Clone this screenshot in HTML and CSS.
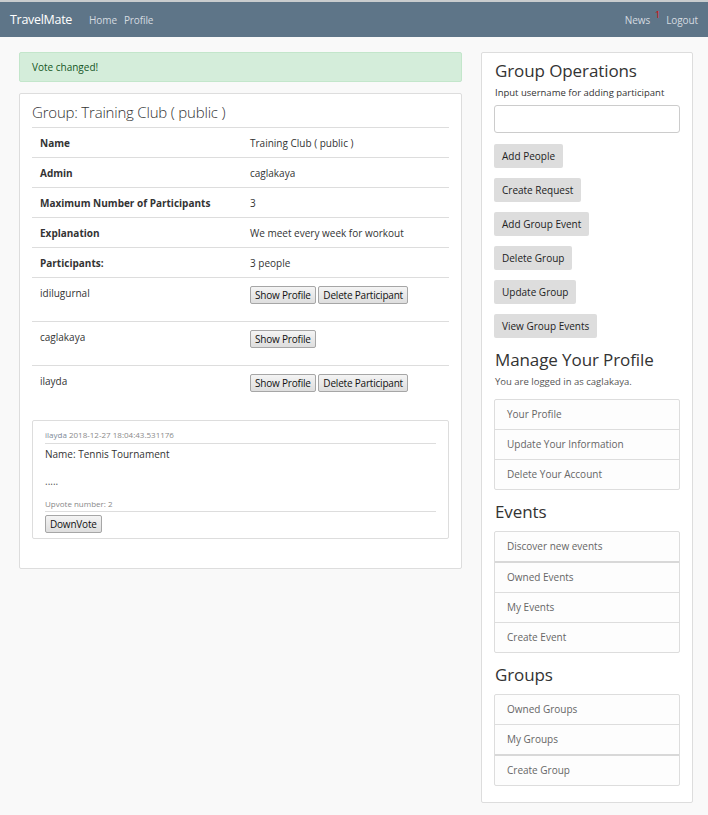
FILE: index.html
```html
<!DOCTYPE html>
<html>
<head>
<meta charset="utf-8">
<title>TravelMate</title>
<link rel="stylesheet" href="styles.css">
</head>
<body>
<nav class="navbar">
  <div class="nav-left">
    <span class="brand">TravelMate</span>
    <a class="nav-link">Home</a>
    <a class="nav-link">Profile</a>
  </div>
  <div class="nav-right">
    <a class="nav-link">News</a><sup class="badge">1</sup>
    <a class="nav-link">Logout</a>
  </div>
</nav>
<div class="page">
  <main class="main-col">
    <div class="alert">Vote changed!</div>
    <section class="card">
      <h3 class="card-title">Group: Training Club ( public )</h3>
      <table class="info">
        <tr><th>Name</th><td>Training Club ( public )</td></tr>
        <tr><th>Admin</th><td>caglakaya</td></tr>
        <tr><th>Maximum Number of Participants</th><td>3</td></tr>
        <tr><th>Explanation</th><td>We meet every week for workout</td></tr>
        <tr><th>Participants:</th><td>3 people</td></tr>
        <tr class="prow"><td>idilugurnal</td><td><button class="btn">Show Profile</button> <button class="btn">Delete Participant</button></td></tr>
        <tr class="prow"><td>caglakaya</td><td><button class="btn">Show Profile</button></td></tr>
        <tr class="prow"><td>ilayda</td><td><button class="btn">Show Profile</button> <button class="btn">Delete Participant</button></td></tr>
      </table>
      <div class="post">
        <div class="post-meta"><span class="post-user">ilayda</span> 2018-12-27 18:04:43.531176</div>
        <div class="post-name">Name: Tennis Tournament</div>
        <div class="post-dots">.....</div>
        <div class="post-votes">Upvote number: 2</div>
        <button class="btn btn-vote">DownVote</button>
      </div>
    </section>
  </main>
  <aside class="side">
    <h2 class="side-h first">Group Operations</h2>
    <label class="side-label">Input username for adding participant</label>
    <input class="side-input" type="text">
    <div class="ops">
      <button class="op">Add People</button>
      <button class="op">Create Request</button>
      <button class="op">Add Group Event</button>
      <button class="op">Delete Group</button>
      <button class="op">Update Group</button>
      <button class="op">View Group Events</button>
    </div>
    <h2 class="side-h">Manage Your Profile</h2>
    <p class="side-text">You are logged in as caglakaya.</p>
    <ul class="list">
      <li>Your Profile</li>
      <li>Update Your Information</li>
      <li>Delete Your Account</li>
    </ul>
    <h2 class="side-h lh">Events</h2>
    <ul class="list">
      <li>Discover new events</li>
      <li class="sep">Owned Events</li>
      <li>My Events</li>
      <li>Create Event</li>
    </ul>
    <h2 class="side-h lh">Groups</h2>
    <ul class="list">
      <li>Owned Groups</li>
      <li>My Groups</li>
      <li class="sep">Create Group</li>
    </ul>
  </aside>
</div>
</body>
</html>
```
FILE: styles.css
```css
* { box-sizing: border-box; }
html, body { margin: 0; padding: 0; }
body {
  background: #f9f9f9;
  font-family: "Open Sans", "Noto Sans", "Liberation Sans", sans-serif;
  color: #333;
  font-size: 10px;
  width: 708px;
}
.navbar {
  height: 37px;
  border-top: 2px solid #c9ccce;
  background: #5e7588;
  display: flex;
  justify-content: space-between;
  align-items: center;
  padding: 0 10px 0 10px;
}
.nav-left, .nav-right { display: flex; align-items: center; }
.brand { color: #fff; font-size: 12.5px; margin-right: 17px; letter-spacing: -0.3px; }
.nav-link { color: #d5dbe0; font-size: 10px; margin-right: 7px; letter-spacing: -0.1px; }
.nav-right .nav-link { margin-right: 0; }
.badge { color: #e00000; font-size: 9px; margin: 0 6px 0 5px; position: relative; top: -5px; }
.page {
  display: flex;
  gap: 19px;
  padding: 15px 15px 10px 19px;
  align-items: flex-start;
}
.main-col { width: 443px; }
.alert {
  background: #d4edda;
  border: 1px solid #c3e6cb;
  color: #155724;
  border-radius: 2px;
  height: 30px;
  padding: 0 12px;
  display: flex;
  align-items: center;
  font-size: 10px;
  margin-bottom: 11px;
}
.card {
  background: #fff;
  border: 1px solid #ddd;
  border-radius: 2px;
  padding: 6px 12px 29px 12px;
}
.card-title {
  font-size: 15px;
  font-weight: 300;
  margin: 0;
  height: 27px;
  line-height: 24px;
  color: #333;
  letter-spacing: -0.2px;
}
.info { width: 100%; border-collapse: collapse; }
.info th, .info td {
  border-top: 1px solid #ddd;
  height: 30px;
  padding: 0 8px;
  text-align: left;
  font-size: 10px;
  vertical-align: middle;
}
.info th { width: 210px; font-weight: 700; color: #333; }
.info td { color: #333; }
.info tr.prow td {
  height: 44px;
  vertical-align: top;
  padding-top: 8px;
}
.btn {
  font-family: inherit;
  font-size: 10px;
  letter-spacing: -0.2px;
  color: #111;
  background: linear-gradient(#f4f4f4, #dedede);
  border: 1px solid #a6a6a6;
  border-radius: 2px;
  padding: 1px 4px;
  height: 18px;
  line-height: 14px;
  margin: 0;
}
.post {
  margin-top: 10px;
  border: 1px solid #ddd;
  border-radius: 2px;
  padding: 8px 12px 5px 12px;
}
.post-meta {
  font-size: 8px;
  color: #8a8a8a;
  padding-bottom: 3px;
  border-bottom: 1px solid #ddd;
}
.post-user { color: #7d8a98; }
.post-name { font-size: 10px; color: #333; margin-top: 3px; line-height: 15px; }
.post-dots { font-size: 10px; color: #555; margin-top: 12px; line-height: 14px; }
.post-votes {
  font-size: 8px; color: #888;
  margin-top: 10px;
  padding-bottom: 2px;
  border-bottom: 1px solid #ddd;
}
.btn-vote { margin-top: 3px; font-size: 10px; padding: 1px 4px; }
.side {
  width: 212px;
  background: #fff;
  border: 1px solid #ddd;
  border-radius: 2px;
  padding: 6px 13px 16px 13px;
}
.side-h {
  font-size: 17px;
  font-weight: 500;
  margin: 10px 0 3px 0;
  line-height: 24px;
  color: #333;
  letter-spacing: -0.1px;
}
.side-h.first { margin-top: 0; }
.side-h.lh { margin-bottom: 7px; }
.side-label { display: block; font-size: 9.5px; color: #333; margin-bottom: 6px; }
.side-input {
  display: block;
  width: 186px;
  height: 28px;
  border: 1px solid #ccc;
  border-radius: 3px;
  margin: 0 0 11px -1px;
}
.ops { display: flex; flex-direction: column; align-items: flex-start; gap: 10px; }
.op {
  font-family: inherit;
  font-size: 10px;
  color: #222;
  background: #dddddd;
  border: none;
  border-radius: 2px;
  height: 24px;
  padding: 0 8px;
  margin-left: -1px;
}
.side-text { font-size: 9.5px; color: #555; margin: 0 0 11px 0; }
.list {
  list-style: none;
  margin: 0;
  padding: 0;
  width: 186px;
  border: 1px solid #ddd;
  border-radius: 2px;
  background: #fdfdfd;
  margin-left: -1px;
}
.list li {
  height: 30px;
  line-height: 29px;
  padding-left: 12px;
  font-size: 10px;
  color: #666;
  border-top: 1px solid #ddd;
}
.list li:first-child { border-top: none; height: 29px; }
.list li.sep { border-top: 2px solid #d8d8d8; height: 31px; }
```
